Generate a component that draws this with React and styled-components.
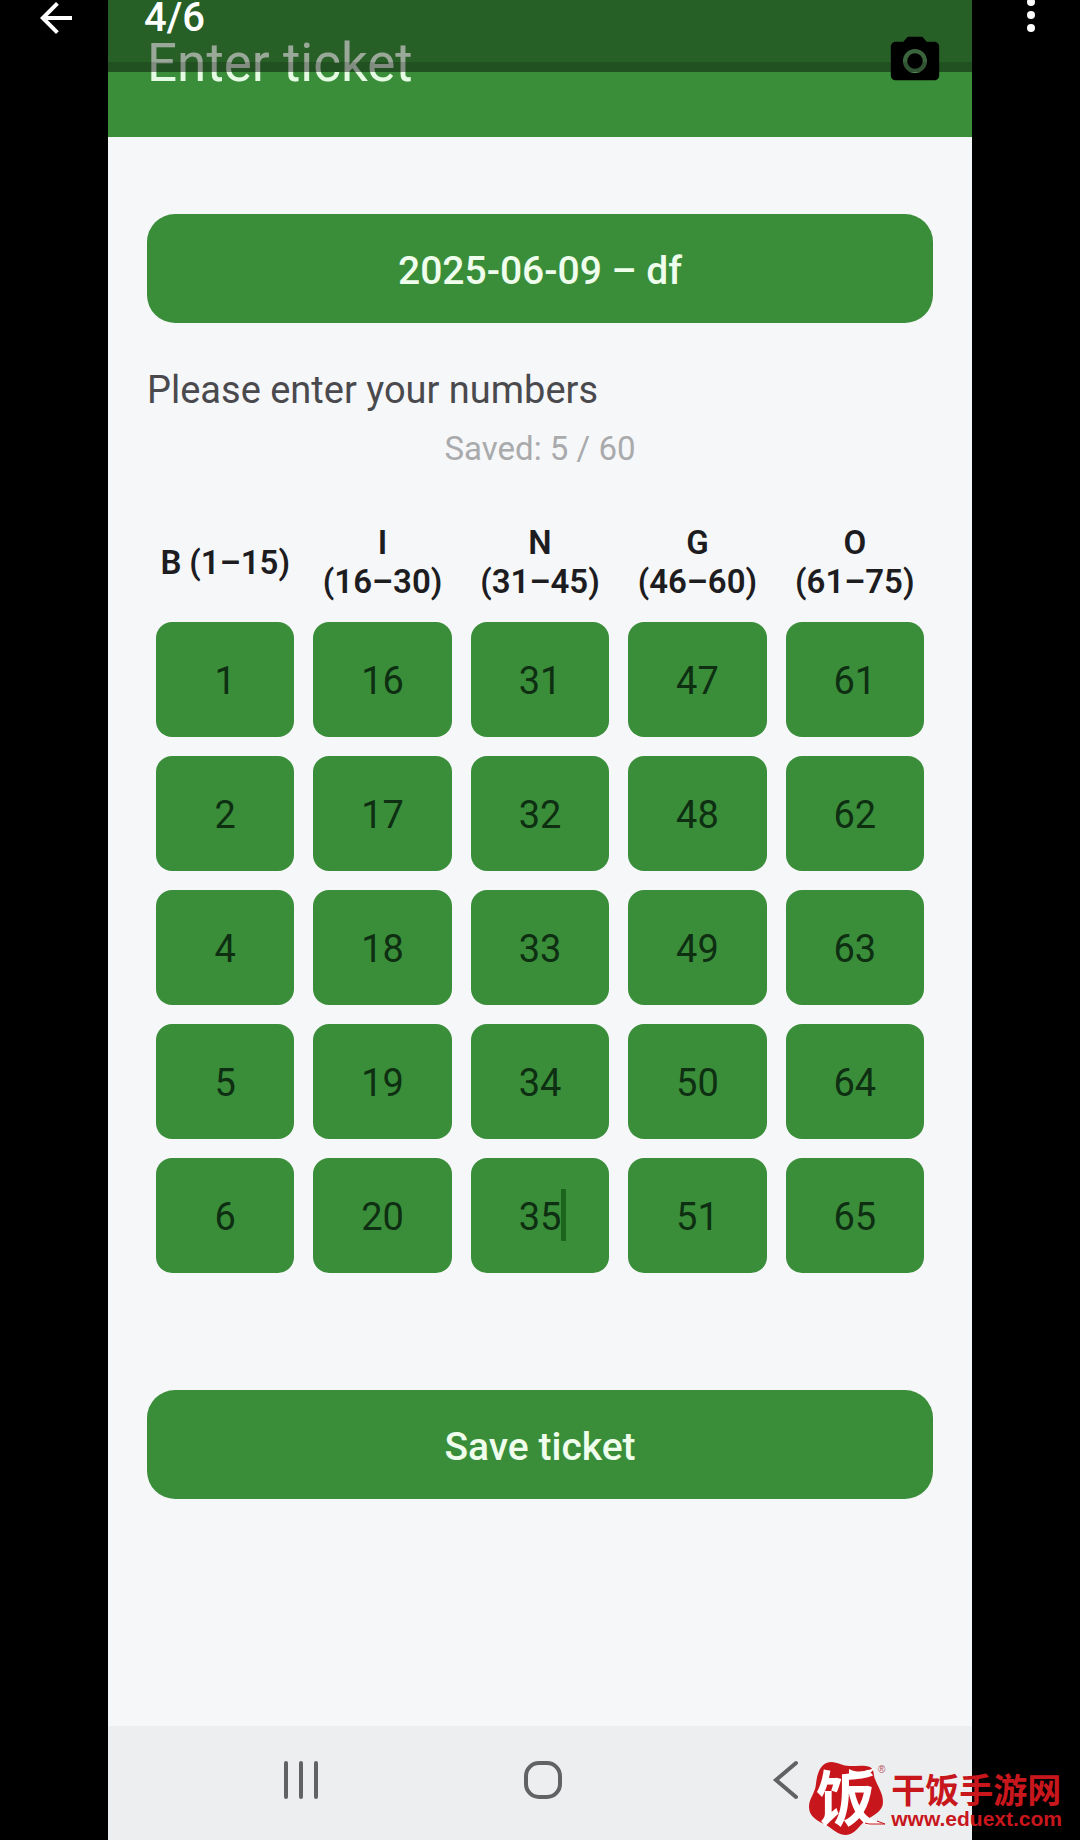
import React, { useState } from "react";
import styled, { createGlobalStyle } from "styled-components";

const columns = [
  { letter: "B", range: "(1–15)", numbers: [1, 2, 4, 5, 6] },
  { letter: "I", range: "(16–30)", numbers: [16, 17, 18, 19, 20] },
  { letter: "N", range: "(31–45)", numbers: [31, 32, 33, 34, 35] },
  { letter: "G", range: "(46–60)", numbers: [47, 48, 49, 50, 51] },
  { letter: "O", range: "(61–75)", numbers: [61, 62, 63, 64, 65] },
];
const rows = [0, 1, 2, 3, 4];

export default function App() {
  return (
    <>
      <GlobalStyle />
      <Viewer>
        <Screen>
          <Header>
            <Title>Enter ticket</Title>
            <CameraButton aria-label="Scan ticket">
              <svg width="58" height="58" viewBox="0 0 24 24">
                <circle cx="12" cy="12" r="6" fill="#57965a" />
                <circle cx="12" cy="12" r="3.2" />
                <path d="M9 2 7.170 4H4c-1.100 0-2 .9-2 2v12c0 1.100.9 2 2 2h16c1.100 0 2-.9 2-2V6c0-1.100-.9-2-2-2h-3.170L15 2H9zm3 15c-2.760 0-5-2.240-5-5s2.240-5 5-5 5 2.240 5 5-2.240 5-5 5z" />
              </svg>
            </CameraButton>
          </Header>
          <TicketForm />
          <NavBar>
            <NavButton aria-label="Recent apps">
              <svg width="40" height="40" viewBox="0 0 40 40">
                <path d="M4 3v34M19 3v34M34 3v34" />
              </svg>
            </NavButton>
            <NavButton aria-label="Home">
              <svg width="40" height="40" viewBox="0 0 40 40">
                <rect x="3" y="3" width="34" height="34" rx="13" />
              </svg>
            </NavButton>
            <NavButton aria-label="Back">
              <svg width="40" height="40" viewBox="0 0 40 40">
                <path d="M32 3 12 20l20 17" />
              </svg>
            </NavButton>
          </NavBar>
        </Screen>
        <ViewerBar>
          <ViewerButton aria-label="Close viewer">
            <svg width="48" height="48" viewBox="0 0 24 24">
              <path d="M20 11H7.830l5.590-5.590L12 4l-8 8 8 8 1.410-1.410L7.830 13H20v-2z" />
            </svg>
          </ViewerButton>
          <Counter>4/6</Counter>
          <ViewerButton aria-label="More options">
            <svg width="48" height="48" viewBox="0 0 48 48">
              <circle cx="24" cy="8" r="4" />
              <circle cx="24" cy="21" r="4" />
              <circle cx="24" cy="34" r="4" />
            </svg>
          </ViewerButton>
        </ViewerBar>
        <Watermark />
      </Viewer>
    </>
  );
}

function TicketForm() {
  const [values, setValues] = useState(columns.map((c) => c.numbers));
  const change = (col, row, value) =>
    setValues(
      values.map((list, c) =>
        c === col ? list.map((n, r) => (r === row ? value : n)) : list
      )
    );
  return (
    <Form onSubmit={(e) => e.preventDefault()}>
      <ActionButton type="button">2025-06-09 – df</ActionButton>
      <Prompt>Please enter your numbers</Prompt>
      <SavedText>Saved: 5 / 60</SavedText>
      <Board>
        {columns.map((column) => (
          <ColumnTitle key={column.letter}>
            <span>{column.letter}</span>
            <span>{column.range}</span>
          </ColumnTitle>
        ))}
        {rows.map((row) =>
          columns.map((column, col) => (
            <Cell key={column.letter + row}>
              <NumberInput
                aria-label={`${column.letter} ${row + 1}`}
                inputMode="numeric"
                value={values[col][row]}
                onChange={(e) => change(col, row, e.target.value)}
              />
              {column.letter === "N" && row === 4 && <Caret />}
            </Cell>
          ))
        )}
      </Board>
      <ActionButton type="submit">Save ticket</ActionButton>
    </Form>
  );
}

function Watermark() {
  return (
    <Mark>
      <svg width="78" height="76" viewBox="0 0 78 76">
        <path
          d="M7 23C8 12 12 1 22 1c7 0 11 4 19 4 8 0 15-1 20 1 5 3 3 8 5 12 3 8 8 14 8 23 0 10-10 13-18 19-6 5-11 14-19 14-8 0-13-6-20-10C9 60 0 56 0 46 0 37 6 33 7 23z"
          fill="#c8161d"
        />
        <LogoGlyph x="7" y="60">
          饭
        </LogoGlyph>
        <path d="M40 8c8 4 16 3 25-1-2 7-14 9-25 6z" fill="#fff" />
        <path d="M56 54c6 5 12 8 20 9H62l-8-5z" fill="#fff" />
        <path d="M56 62l4 1h16l-8-3" fill="none" stroke="#c8161d" />
        <LogoSign x="69" y="12">
          ®
        </LogoSign>
      </svg>
      <MarkText>
        <MarkName>干饭手游网</MarkName>
        <MarkUrl>www.eduext.com</MarkUrl>
      </MarkText>
    </Mark>
  );
}

const GlobalStyle = createGlobalStyle`
  * {
    box-sizing: border-box;
  }
  body {
    margin: 0;
    background: #000;
    font-family: Roboto, sans-serif;
  }
  button, input {
    font-family: inherit;
    border: none;
    padding: 0;
  }
  svg {
    display: block;
  }
`;

const Viewer = styled.div`
  position: relative;
  overflow: hidden;
  background: #000;
`;

const Screen = styled.main`
  display: flex;
  flex-direction: column;
  width: 80%;
  min-height: 100vh;
  margin: 0 auto;
  background: #f6f7f9;
`;

const Header = styled.header`
  display: flex;
  justify-content: space-between;
  align-items: flex-end;
  padding: 32px 28px 47px 39px;
  background: #3a8e3a;
`;

const Title = styled.h1`
  margin: 0;
  color: #e6fbe4;
  font-size: 53px;
  font-weight: 400;
  line-height: 54px;
`;

const CameraButton = styled.button`
  background: none;
  cursor: pointer;
`;

const Form = styled.form`
  display: flex;
  flex-direction: column;
  flex: 1;
  padding: 77px 39px;
`;

const ActionButton = styled.button`
  height: 109px;
  padding-top: 4px;
  border-radius: 28px;
  background: #3a8e3a;
  color: #effdec;
  font-size: 39px;
  font-weight: 500;
  cursor: pointer;
`;

const Prompt = styled.p`
  margin: 44px 0 0;
  color: #4a4a4e;
  font-size: 38px;
  line-height: 46px;
`;

const SavedText = styled.p`
  margin: 16px 0 0;
  color: #a9aaac;
  font-size: 33px;
  line-height: 40px;
  text-align: center;
`;

const Board = styled.div`
  display: grid;
  grid-template-columns: repeat(5, 1fr);
  gap: 19px;
  margin: 54px 9px 117px;
`;

const ColumnTitle = styled.div`
  display: flex;
  flex-wrap: wrap;
  justify-content: center;
  align-content: center;
  column-gap: 8px;
  padding: 0 3px 2px;
  color: #1d1d21;
  font-size: 33px;
  font-weight: 600;
  line-height: 39px;
  white-space: nowrap;
`;

const Cell = styled.div`
  position: relative;
`;

const NumberInput = styled.input`
  display: block;
  width: 100%;
  height: 115px;
  padding-top: 3px;
  border-radius: 16px;
  background: #3a8e3a;
  color: #0e2f12;
  font-size: 38px;
  text-align: center;
`;

const Caret = styled.span`
  position: absolute;
  top: 31px;
  left: calc(50% + 21px);
  width: 5px;
  height: 52px;
  background: #1b651c;
`;

const NavBar = styled.nav`
  display: flex;
  justify-content: center;
  gap: 201px;
  padding: 34px 0 40px 6px;
  background: #edeef0;
`;

const NavButton = styled.button`
  background: none;
  cursor: pointer;

  svg {
    fill: none;
    stroke: #616264;
    stroke-width: 4;
    stroke-linecap: round;
  }
`;

/* the viewer's own bar, laid over the picture being shown */
const ViewerBar = styled.div`
  position: absolute;
  top: 0;
  left: 0;
  right: 0;
  display: flex;
  align-items: center;
  height: 72px;
  padding: 0 25px 36px 32px;
  background: linear-gradient(
    rgba(0, 0, 0, 0.33) 62px,
    rgba(0, 0, 0, 0.44) 62px
  );
`;

const ViewerButton = styled.button`
  background: none;
  cursor: pointer;

  svg {
    fill: #fff;
  }
`;

const Counter = styled.span`
  flex: 1;
  margin-left: 64px;
  color: #fff;
  font-size: 40px;
  font-weight: 500;
  line-height: 40px;
`;

const Mark = styled.div`
  position: absolute;
  right: 18px;
  bottom: 3px;
  display: flex;
  align-items: center;
  gap: 4px;
`;

const MarkText = styled.div`
  display: flex;
  flex-direction: column;
  color: #c8161d;
`;

const MarkName = styled.span`
  font-family: "Noto Sans CJK SC", sans-serif;
  font-size: 34px;
  font-weight: 700;
  line-height: 40px;
`;

const MarkUrl = styled.span`
  font-family: "Liberation Sans", sans-serif;
  font-size: 21px;
  font-weight: 700;
  line-height: 20px;
`;

const LogoGlyph = styled.text`
  fill: #fff;
  font-family: "Noto Sans CJK SC", sans-serif;
  font-size: 60px;
  font-weight: 700;
`;

const LogoSign = styled.text`
  fill: #b5545a;
  font-family: "Liberation Sans", sans-serif;
  font-size: 10px;
`;
